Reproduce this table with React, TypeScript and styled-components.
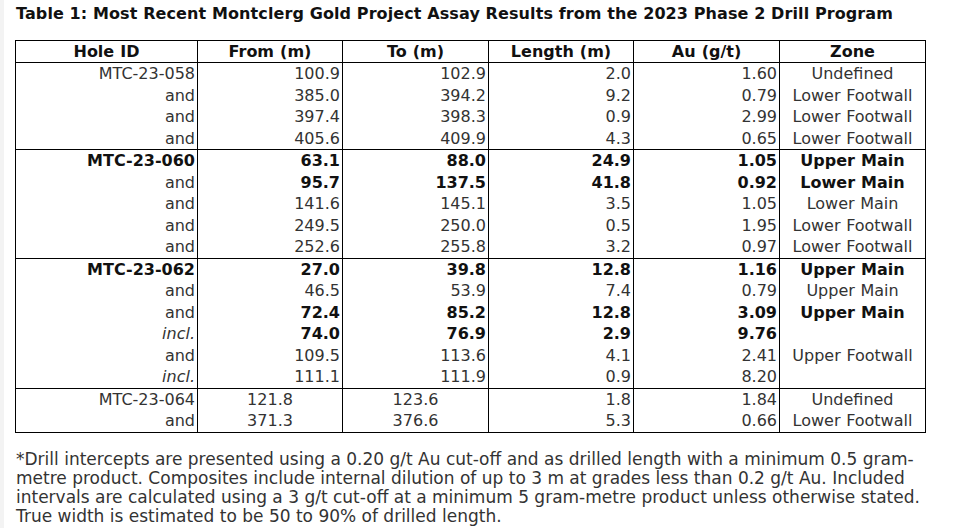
import React from "react";
import styled, { createGlobalStyle, css } from "styled-components";

const GlobalStyle = createGlobalStyle`
  html, body {
    margin: 0;
    padding: 0;
    background: #ffffff;
  }
  body {
    font-family: "DejaVu Sans", Verdana, sans-serif;
    font-size: 16px;
    color: #333333;
    border-left: 4px solid #f3f3f3;
    min-height: 528px;
    box-sizing: border-box;
  }
`;

type Align = "right" | "center";

type Cell = {
  text: string;
  bold?: boolean;
  italic?: boolean;
  align?: Align;
};

type Row = Cell[];

const Page = styled.div`
  padding: 4px 0 0 11px;
`;

const Title = styled.h1`
  margin: 0 0 16px 1px;
  font-size: 16px;
  line-height: 20px;
  font-weight: bold;
  letter-spacing: 0.1px;
  color: #111111;
`;

const Table = styled.table`
  width: 910px;
  table-layout: fixed;
  border-collapse: collapse;
  border: 1px solid #000000;
  word-spacing: 0.5px;
`;

const Col = styled.col<{ $w: number }>`
  width: ${(p) => p.$w}px;
`;

const Group = styled.tbody`
  border-top: 1px solid #000000;
`;

const HeadCell = styled.th`
  border: 1px solid #000000;
  padding: 1px 2px 0;
  height: 20px;
  line-height: 20px;
  font-weight: bold;
  text-align: center;
  color: #111111;
`;

const DataCell = styled.td<{ $bold?: boolean; $italic?: boolean; $align: Align }>`
  border-left: 1px solid #000000;
  border-right: 1px solid #000000;
  padding: 0 2px;
  height: 21.5px;
  line-height: 21.5px;
  white-space: nowrap;
  text-align: ${(p) => p.$align};
  ${(p) =>
    p.$bold &&
    css`
      font-weight: bold;
      color: #111111;
    `}
  ${(p) =>
    p.$italic &&
    css`
      font-style: italic;
    `}
`;

const Note = styled.p`
  margin: 17px 0 0 1px;
  font-size: 17px;
  line-height: 19px;
  white-space: nowrap;
`;

const widths = [182, 145, 146, 145, 146, 146];
const headers = ["Hole ID", "From (m)", "To (m)", "Length (m)", "Au (g/t)", "Zone"];

const r = (
  hole: string,
  from: string,
  to: string,
  len: string,
  au: string,
  zone: string,
  opts: { bold?: number[]; italicHole?: boolean; centerFromTo?: boolean } = {}
): Row => {
  const b = (i: number) => (opts.bold || []).includes(i);
  return [
    { text: hole, bold: b(0), italic: opts.italicHole, align: "right" },
    { text: from, bold: b(1), align: opts.centerFromTo ? "center" : "right" },
    { text: to, bold: b(2), align: opts.centerFromTo ? "center" : "right" },
    { text: len, bold: b(3), align: "right" },
    { text: au, bold: b(4), align: "right" },
    { text: zone, bold: b(5), align: "center" },
  ];
};

const ALL = [0, 1, 2, 3, 4, 5];
const VALS = [1, 2, 3, 4, 5];

const groups: Row[][] = [
  [
    r("MTC-23-058", "100.9", "102.9", "2.0", "1.60", "Undefined"),
    r("and", "385.0", "394.2", "9.2", "0.79", "Lower Footwall"),
    r("and", "397.4", "398.3", "0.9", "2.99", "Lower Footwall"),
    r("and", "405.6", "409.9", "4.3", "0.65", "Lower Footwall"),
  ],
  [
    r("MTC-23-060", "63.1", "88.0", "24.9", "1.05", "Upper Main", { bold: ALL }),
    r("and", "95.7", "137.5", "41.8", "0.92", "Lower Main", { bold: VALS }),
    r("and", "141.6", "145.1", "3.5", "1.05", "Lower Main"),
    r("and", "249.5", "250.0", "0.5", "1.95", "Lower Footwall"),
    r("and", "252.6", "255.8", "3.2", "0.97", "Lower Footwall"),
  ],
  [
    r("MTC-23-062", "27.0", "39.8", "12.8", "1.16", "Upper Main", { bold: ALL }),
    r("and", "46.5", "53.9", "7.4", "0.79", "Upper Main"),
    r("and", "72.4", "85.2", "12.8", "3.09", "Upper Main", { bold: VALS }),
    r("incl.", "74.0", "76.9", "2.9", "9.76", "", { bold: VALS, italicHole: true }),
    r("and", "109.5", "113.6", "4.1", "2.41", "Upper Footwall"),
    r("incl.", "111.1", "111.9", "0.9", "8.20", "", { italicHole: true }),
  ],
  [
    r("MTC-23-064", "121.8", "123.6", "1.8", "1.84", "Undefined", { centerFromTo: true }),
    r("and", "371.3", "376.6", "5.3", "0.66", "Lower Footwall", { centerFromTo: true }),
  ],
];

const noteLines = [
  "*Drill intercepts are presented using a 0.20 g/t Au cut-off and as drilled length with a minimum 0.5 gram-",
  "metre product. Composites include internal dilution of up to 3 m at grades less than 0.2 g/t Au. Included",
  "intervals are calculated using a 3 g/t cut-off at a minimum 5 gram-metre product unless otherwise stated.",
  "True width is estimated to be 50 to 90% of drilled length.",
];

export default function App() {
  return (
    <>
      <GlobalStyle />
      <Page>
        <Title>
          Table 1: Most Recent Montclerg Gold Project Assay Results from the 2023 Phase 2 Drill Program
        </Title>
        <Table>
          <colgroup>
            {widths.map((w, i) => (
              <Col key={i} $w={w} />
            ))}
          </colgroup>
          <thead>
            <tr>
              {headers.map((h) => (
                <HeadCell key={h}>{h}</HeadCell>
              ))}
            </tr>
          </thead>
          {groups.map((rows, gi) => (
            <Group key={gi}>
              {rows.map((row, ri) => (
                <tr key={ri}>
                  {row.map((c, ci) => (
                    <DataCell key={ci} $bold={c.bold} $italic={c.italic} $align={c.align || "right"}>
                      {c.text}
                    </DataCell>
                  ))}
                </tr>
              ))}
            </Group>
          ))}
        </Table>
        <Note>
          {noteLines.map((l, i) => (
            <React.Fragment key={i}>
              {l}
              {i < noteLines.length - 1 && <br />}
            </React.Fragment>
          ))}
        </Note>
      </Page>
    </>
  );
}
